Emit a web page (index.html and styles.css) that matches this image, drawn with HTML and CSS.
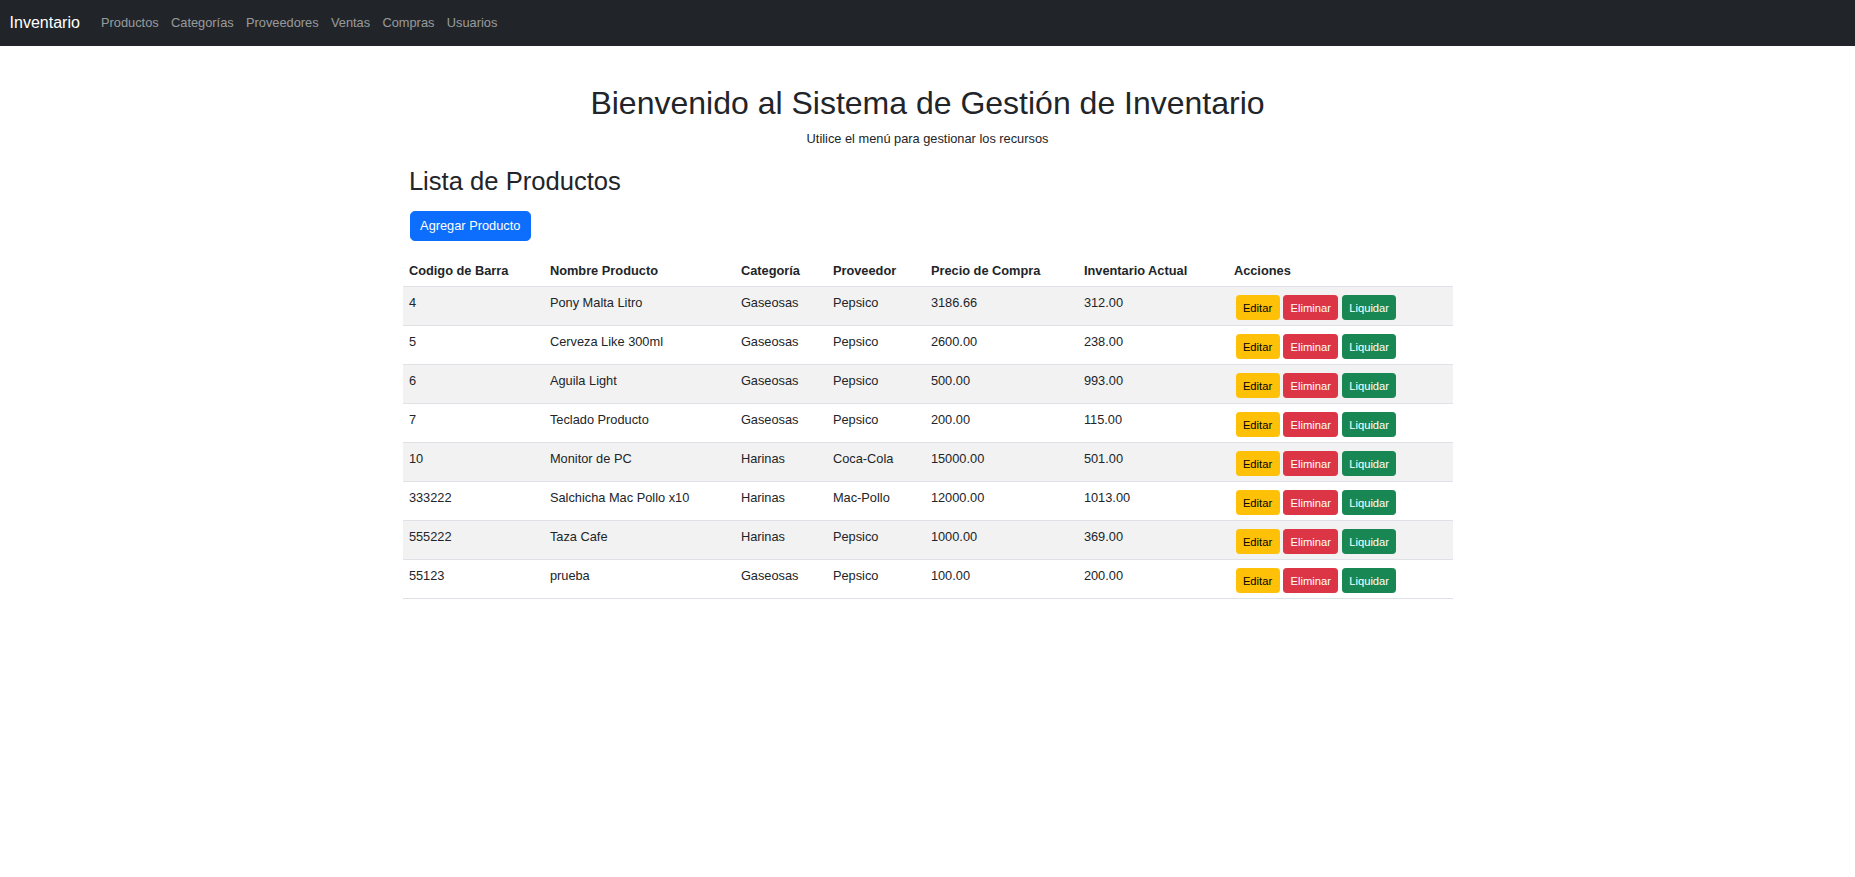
FILE: index.html
```html
<!DOCTYPE html>
<html lang="es">
<head>
<meta charset="utf-8">
<title>Inventario</title>
<link rel="stylesheet" href="styles.css">
</head>
<body>
<nav class="navbar">
  <a class="brand" href="#">Inventario</a>
  <ul class="nav">
    <li><a href="#">Productos</a></li>
    <li><a href="#">Categorías</a></li>
    <li><a href="#">Proveedores</a></li>
    <li><a href="#">Ventas</a></li>
    <li><a href="#">Compras</a></li>
    <li><a href="#">Usuarios</a></li>
  </ul>
</nav>
<main class="container">
  <h1 class="title">Bienvenido al Sistema de Gestión de Inventario</h1>
  <p class="lead">Utilice el menú para gestionar los recursos</p>
  <h2 class="subtitle">Lista de Productos</h2>
  <button class="btn btn-primary">Agregar Producto</button>
  <table class="table">
    <thead>
      <tr>
        <th class="c1">Codigo de Barra</th>
        <th class="c2">Nombre Producto</th>
        <th class="c3">Categoría</th>
        <th class="c4">Proveedor</th>
        <th class="c5">Precio de Compra</th>
        <th class="c6">Inventario Actual</th>
        <th>Acciones</th>
      </tr>
    </thead>
    <tbody>
      <tr><td>4</td><td>Pony Malta Litro</td><td>Gaseosas</td><td>Pepsico</td><td>3186.66</td><td>312.00</td><td class="acts"><button class="bs bs-w">Editar</button> <button class="bs bs-d">Eliminar</button> <button class="bs bs-s">Liquidar</button></td></tr>
      <tr><td>5</td><td>Cerveza Like 300ml</td><td>Gaseosas</td><td>Pepsico</td><td>2600.00</td><td>238.00</td><td class="acts"><button class="bs bs-w">Editar</button> <button class="bs bs-d">Eliminar</button> <button class="bs bs-s">Liquidar</button></td></tr>
      <tr><td>6</td><td>Aguila Light</td><td>Gaseosas</td><td>Pepsico</td><td>500.00</td><td>993.00</td><td class="acts"><button class="bs bs-w">Editar</button> <button class="bs bs-d">Eliminar</button> <button class="bs bs-s">Liquidar</button></td></tr>
      <tr><td>7</td><td>Teclado Producto</td><td>Gaseosas</td><td>Pepsico</td><td>200.00</td><td>115.00</td><td class="acts"><button class="bs bs-w">Editar</button> <button class="bs bs-d">Eliminar</button> <button class="bs bs-s">Liquidar</button></td></tr>
      <tr><td>10</td><td>Monitor de PC</td><td>Harinas</td><td>Coca-Cola</td><td>15000.00</td><td>501.00</td><td class="acts"><button class="bs bs-w">Editar</button> <button class="bs bs-d">Eliminar</button> <button class="bs bs-s">Liquidar</button></td></tr>
      <tr><td>333222</td><td>Salchicha Mac Pollo x10</td><td>Harinas</td><td>Mac-Pollo</td><td>12000.00</td><td>1013.00</td><td class="acts"><button class="bs bs-w">Editar</button> <button class="bs bs-d">Eliminar</button> <button class="bs bs-s">Liquidar</button></td></tr>
      <tr><td>555222</td><td>Taza Cafe</td><td>Harinas</td><td>Pepsico</td><td>1000.00</td><td>369.00</td><td class="acts"><button class="bs bs-w">Editar</button> <button class="bs bs-d">Eliminar</button> <button class="bs bs-s">Liquidar</button></td></tr>
      <tr><td>55123</td><td>prueba</td><td>Gaseosas</td><td>Pepsico</td><td>100.00</td><td>200.00</td><td class="acts"><button class="bs bs-w">Editar</button> <button class="bs bs-d">Eliminar</button> <button class="bs bs-s">Liquidar</button></td></tr>
    </tbody>
  </table>
</main>
</body>
</html>
```
FILE: styles.css
```css
* { box-sizing: border-box; }
html, body { margin: 0; padding: 0; background: #fff; }
body {
  font-family: "Liberation Sans", Arial, sans-serif;
  font-size: 12.8px;
  line-height: 1.5;
  color: #212529;
}
.navbar {
  display: flex;
  align-items: center;
  height: 46px;
  padding: 0 9.6px;
  background: #212529;
}
.brand {
  font-size: 16px;
  color: #fff;
  text-decoration: none;
  margin-right: 15px;
}
.nav {
  display: flex;
  list-style: none;
  margin: 0;
  padding: 0;
}
.nav a {
  display: block;
  padding: 6.4px 6.2px;
  color: rgba(255,255,255,.55);
  text-decoration: none;
}
.container {
  width: 1050px;
  margin: 0 auto;
  padding-top: 38px;
}
.title {
  font-size: 32px;
  font-weight: 500;
  line-height: 1.2;
  text-align: center;
  margin: 0 0 6.4px;
}
.lead {
  text-align: center;
  margin: 0 0 18px;
  font-size: 12.8px;
}
.subtitle {
  font-size: 25.6px;
  font-weight: 500;
  line-height: 1.2;
  margin: 0 0 14px 6.4px;
}
.btn {
  font-family: inherit;
  font-size: 12.8px;
  line-height: 19.2px;
  padding: 4.8px 9.6px;
  border: 1px solid transparent;
  border-radius: 4.8px;
  margin-left: 7px;
  cursor: pointer;
}
.btn-primary { background: #0d6efd; border-color: #0d6efd; color: #fff; }
.table {
  width: 100%;
  border-collapse: collapse;
  margin-top: 13px;
}
.table th {
  text-align: left;
  font-weight: 700;
  padding: 6.4px;
  border-bottom: 1px solid #dee2e6;
  vertical-align: bottom;
}
.table td {
  padding: 6px 6.4px 7px;
  border-bottom: 1px solid #dee2e6;
  vertical-align: top;
}
.table td.acts {
  padding: 8px 6.4px 5px 8px;
  white-space: nowrap;
  line-height: 0;
}
.table tbody tr:nth-child(odd) td { background: #f2f2f2; }
.c1 { width: 141px; }
.c2 { width: 191px; }
.c3 { width: 92px; }
.c4 { width: 98px; }
.c5 { width: 153px; }
.c6 { width: 150px; }
.bs {
  font-family: inherit;
  font-size: 11.2px;
  line-height: 16.8px;
  height: 25px;
  padding: 3.2px 6.4px;
  border: 1px solid transparent;
  border-radius: 3.2px;
  margin: 0;
  vertical-align: top;
}
.bs-w { background: #ffc107; border-color: #ffc107; color: #000; }
.bs-d { background: #dc3545; border-color: #dc3545; color: #fff; }
.bs-s { background: #198754; border-color: #198754; color: #fff; }
```
